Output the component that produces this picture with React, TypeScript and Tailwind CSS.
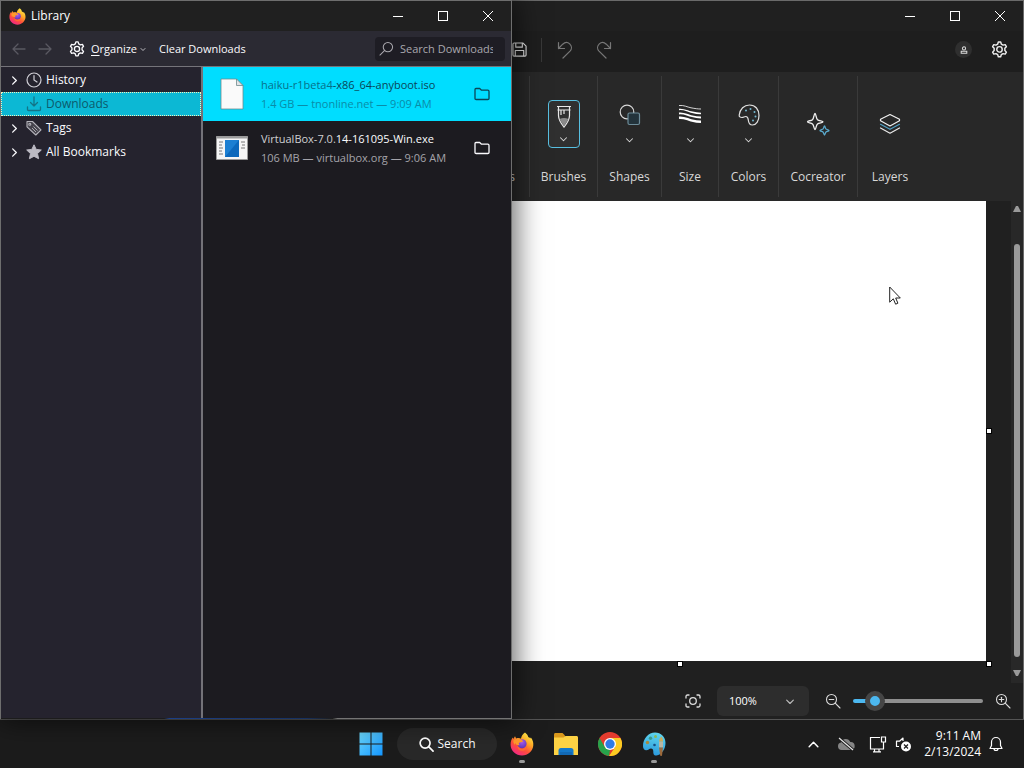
import React from 'react';

type P = { className?: string };

function Firefox({ className, id }: P & { id: string }) {
  return (
    <svg viewBox="0 0 24 24" className={className} aria-hidden="true">
      <defs>
        <linearGradient id={id + 'a'} x1="0.85" y1="0.05" x2="0.25" y2="1">
          <stop offset="0" stopColor="#fff04a" />
          <stop offset="0.35" stopColor="#ffa927" />
          <stop offset="0.65" stopColor="#ff5038" />
          <stop offset="1" stopColor="#f0248c" />
        </linearGradient>
        <radialGradient id={id + 'b'} cx="0.5" cy="0.3" r="0.7">
          <stop offset="0" stopColor="#a75cf0" />
          <stop offset="1" stopColor="#5b34b8" />
        </radialGradient>
      </defs>
      <path
        fill={'url(#' + id + 'a)'}
        d="M15 0.5c2 1.5 3 3 3.3 4.8 1-.2 1.5.6 1.8 1.3l.8-1c1.8 2.3 2.6 4.900 2.400 7.600C23 19 18 23.500 12 23.500S.8 19 .6 13C.5 9.500 1.500 7 2.800 5.500l.5 1.500L5 4.300l1.200 2.200C8 5.900 9.800 6 11 6.800 11.200 4.500 12.800 2 15 .5z"
      />
      <circle cx="12" cy="11.800" r="4.600" fill={'url(#' + id + 'b)'} />
      <path fill="#ff9a2b" d="M3.500 8.500c2-2 5-2.300 7.500-1.200l2.300 1.900c-1 1-3.500.8-4.200 1.600-.5.700-.2 1.600.6 2.200-2 .6-3.800-.4-4.300-2.100-.5.500-.7 1.200-.7 2-1-1.300-1.500-2.900-1.200-4.400z" />
      <path fill="#ff6a33" d="M7.200 13.500c1 2.200 3 3.400 5.200 3.200 2.200-.1 4-1.500 4.600-3.500.6 3-1.500 5.600-5 5.600-2.600 0-4.600-2-4.800-5.300z" />
    </svg>
  );
}

function Gear({ className }: P) {
  return (
    <svg viewBox="0 0 16 16" className={className} fill="none" stroke="currentColor" strokeWidth="1.200" strokeLinejoin="round" aria-hidden="true">
      <path d="M6.500 2.500 7 .8h2l.5 1.700 1.500.9 1.800-.4 1 1.700-1.300 1.400v1.800l1.300 1.400-1 1.700-1.800-.4-1.500.9-.5 1.700H7l-.5-1.700-1.500-.9-1.800.4-1-1.700 1.300-1.400V6.100L2.200 4.700l1-1.700 1.800.4z" transform="translate(0 .9)" />
      <circle cx="8" cy="7.900" r="2.300" />
    </svg>
  );
}

function Chevron({ className, dir = 'down' }: P & { dir?: 'down' | 'right' | 'up' }) {
  const d = { down: 'M2 5l4 4 4-4', right: 'M4 2l4 4-4 4', up: 'M2 8l4-4 4 4' }[dir];
  return (
    <svg viewBox="0 0 12 12" className={className} fill="none" stroke="currentColor" strokeWidth="1.400" strokeLinecap="round" strokeLinejoin="round" aria-hidden="true">
      <path d={d} />
    </svg>
  );
}

function Magnifier({ className, sign = '' }: P & { sign?: '' | '-' | '+' }) {
  return (
    <svg viewBox="0 0 16 16" className={className} fill="none" stroke="currentColor" strokeWidth="1.100" strokeLinecap="round" aria-hidden="true">
      <circle cx="6.500" cy="6.500" r="5" />
      <path d="M10.200 10.200 15 15" />
      {sign !== '' && <path d="M4.200 6.500h4.600" />}
      {sign === '+' && <path d="M6.500 4.200v4.600" />}
    </svg>
  );
}

function Caption() {
  return (
    <div className="flex h-[30px] shrink-0 items-center text-white">
      <button aria-label="Minimize" className="flex h-full w-[46px] items-center justify-center">
        <svg viewBox="0 0 10 10" className="size-[10px]" stroke="currentColor" shapeRendering="crispEdges"><path d="M0 5.500h10" /></svg>
      </button>
      <button aria-label="Maximize" className="flex h-full w-11 items-center justify-center">
        <svg viewBox="0 0 10 10" className="size-[10px]" fill="none" stroke="currentColor" shapeRendering="crispEdges"><path d="M.5.5h9v9h-9z" /></svg>
      </button>
      <button aria-label="Close" className="flex h-full w-[46px] items-center justify-center">
        <svg viewBox="0 0 10 10" className="size-[10px]" fill="none" stroke="currentColor"><path d="M0 0l10 10M10 0 0 10" /></svg>
      </button>
    </div>
  );
}

function Arrow({ flip }: { flip?: boolean }) {
  return (
    <svg viewBox="0 0 14 12" className={'h-3 w-[14px] ' + (flip ? 'rotate-180' : '')} fill="none" stroke="currentColor" strokeWidth="1.300" strokeLinecap="round" strokeLinejoin="round" aria-hidden="true">
      <path d="M13 6H1M6 1 1 6l5 5" />
    </svg>
  );
}

const places = [
  {
    label: 'History',
    icon: (
      <svg viewBox="0 0 16 16" className="size-4" fill="none" stroke="#d0cfd6" strokeWidth="1.200" strokeLinecap="round">
        <circle cx="8" cy="8" r="7" /><path d="M8 3.500V8l3 2" />
      </svg>
    ),
  },
  {
    label: 'Downloads',
    selected: true,
    icon: (
      <svg viewBox="0 0 16 16" className="size-4" fill="none" stroke="#137487" strokeWidth="1.300" strokeLinecap="round" strokeLinejoin="round">
        <path d="M8 1v9M4.500 6.500 8 10l3.500-3.500M1.500 11v2.500c0 .6.4 1 1 1h11c.6 0 1-.4 1-1V11" />
      </svg>
    ),
  },
  {
    label: 'Tags',
    icon: (
      <svg viewBox="0 0 16 16" className="size-4" fill="#45434c" stroke="#b5b4bb" strokeWidth="1.100" strokeLinejoin="round">
        <path d="M1 1.500h5.500l8.500 8.300-5.200 5.200L1 6.800z" /><circle cx="3.800" cy="4.200" r="1" fill="#25232e" /><path d="m7.500 6.500 4 4M6 8l4 4" strokeWidth=".9" />
      </svg>
    ),
  },
  {
    label: 'All Bookmarks',
    icon: (
      <svg viewBox="0 0 16 16" className="size-4" fill="#bcbac3" stroke="#bcbac3" strokeLinejoin="round">
        <path d="M8 .8l2.200 4.600 5.100.6-3.800 3.600 1.100 5.100L8 12.300l-4.600 2.400 1.100-5.100L.7 6l5.100-.6z" />
      </svg>
    ),
  },
];

function FolderButton({ name }: { name: string }) {
  return (
    <button aria-label={'Show ' + name + ' in folder'} className="mr-[21px] shrink-0">
      <svg viewBox="0 0 16 14" className="h-[14px] w-4" fill="none" stroke="currentColor" strokeWidth="1.300" strokeLinejoin="round">
        <path d="M1 11.500v-9c0-.6.4-1 1-1h3.700L7.500 3.200h6.300c.7 0 1.200.5 1.200 1.200v7c0 .7-.5 1.100-1.200 1.100H2.200c-.7 0-1.200-.3-1.200-1z" />
      </svg>
    </button>
  );
}

function Library() {
  return (
    <section aria-label="Library" className="relative z-10 flex w-1/2 shrink-0 flex-col border-x border-t border-[#6e6e6e] bg-[#1c1b20] shadow-[2px_0_26px_2px_rgba(0,0,0,0.6)]">
      <header className="flex h-[30px] shrink-0 items-center bg-[#202020] pl-2">
        <Firefox id="lib" className="size-[17px]" />
        <h1 className="ml-[5px] flex-1 text-white">Library</h1>
        <Caption />
      </header>
      <div className="flex h-[35px] shrink-0 items-center bg-[#2b2a33] text-[11px]">
        <button aria-label="Back" className="ml-[11px] text-[#5a5962]"><Arrow /></button>
        <button aria-label="Forward" className="ml-3 text-[#5a5962]"><Arrow flip /></button>
        <button className="ml-4 flex items-center text-[#fbfbfe]">
          <Gear className="size-[18px]" />
          <span className="ml-[5px]"><span className="underline underline-offset-2">O</span>rganize</span>
          <Chevron className="ml-[3px] size-[6px]" />
        </button>
        <button className="ml-[13px] text-[#fbfbfe]">Clear Downloads</button>
        <label className="mr-[6px] ml-auto flex h-6 w-[130px] items-center rounded bg-[#1e1d24] pl-1 text-[#a9a8ae]">
          <Magnifier className="size-[15px] shrink-0 -scale-x-100" />
          <input type="search" aria-label="Search Downloads" placeholder="Search Downloads" className="ml-[6px] w-full min-w-0 bg-transparent outline-none placeholder:text-[#a9a8ae]" />
        </label>
      </div>
      <div className="flex min-h-0 flex-1 border-t border-[#75747a]">
        <nav className="w-[202px] shrink-0 border-r-2 border-[#737278] bg-[#25232e] pt-px">
          {places.map((p) => (
            <button
              key={p.label}
              className={'flex h-6 w-full items-center pl-2 text-left ' + (p.selected ? 'border border-dotted border-[#f2f3c0] bg-[#0cb8d4] text-[#0d5a6c]' : 'border border-transparent text-[#fbfbfe]')}
            >
              <span className="w-4 shrink-0">{!p.selected && <Chevron dir="right" className="-ml-px size-[11px]" />}</span>
              {p.icon}
              <span className="ml-1">{p.label}</span>
            </button>
          ))}
        </nav>
        <ul className="min-w-0 flex-1">
          <li className="flex h-[54px] items-center bg-[#00ddff] text-[#0a4658]">
            <svg viewBox="0 0 24 32" className="ml-[17px] h-8 w-6 shrink-0" aria-hidden="true">
              <path d="M1 1h15.500L23 7.500V31H1z" fill="#fafafa" stroke="#6e8a8e" strokeWidth=".8" /><path d="M16.500 1v6.500H23z" fill="#e2e4e6" stroke="#6e8a8e" strokeWidth=".8" />
            </svg>
            <div className="ml-[17px] flex-1 text-[11px] leading-[19px]">
              <p><span className="text-[#07718a]">haiku-r1beta4</span>-x86_64-anyboot.iso</p>
              <p className="text-[#0a8ca8]">1.4 GB — tnonline.net — 9:09 AM</p>
            </div>
            <FolderButton name="haiku-r1beta4-x86_64-anyboot.iso" />
          </li>
          <li className="flex h-[54px] items-center text-[#fbfbfe]">
            <svg viewBox="0 0 32 24" className="ml-[13px] h-6 w-8 shrink-0" aria-hidden="true">
              <path d="M.5.5h31v23H.5z" fill="#f5f5f5" stroke="#9a9a9a" /><path d="M.5.5h31v2H.5z" fill="#9b9b9b" />
              <path d="M9 4h14v17H9z" fill="#1c7fd2" /><path d="M9 21 23 4v17z" fill="#0c68bc" />
              <path d="M3 6h4M3 9h3M3 12h4M3 15h3M3 18h4M25 6h4M26 9h3M25 12h4" stroke="#777" />
            </svg>
            <div className="ml-[13px] flex-1 text-[11px] leading-[19px]">
              <p><span className="text-[#d0d0d3]">VirtualBox-7.0.</span>14-161095-Win.exe</p>
              <p className="text-[#a5a4aa]">106 MB — virtualbox.org — 9:06 AM</p>
            </div>
            <FolderButton name="VirtualBox-7.0.14-161095-Win.exe" />
          </li>
        </ul>
      </div>
      <div className="h-px shrink-0 bg-[linear-gradient(to_right,#1c1c1c_32%,#1c3f86_33%,#16305f_60%,#1c1c1c_65%,#747474_66%)]" />
    </section>
  );
}

const brush = (
  <svg viewBox="0 0 16 24" className="h-6 w-4" fill="none" stroke="#e8e8e8" strokeWidth="1.200" aria-hidden="true">
    <path d="M1 1.500h14M1.500 5h13" /><path d="M2.500 1.500v9c0 4 3 8.500 5.500 11.500 2.500-3 5.500-7.500 5.500-11.500v-9" />
    <path d="M5 5v5M8 5v4" /><path d="M3.500 14c3-1.500 6-1.500 9 0L8 21.500z" fill="#8a8a8a" stroke="none" />
  </svg>
);
const shapes = (
  <svg viewBox="0 0 22 22" className="size-[22px]" fill="none" strokeWidth="1.200" aria-hidden="true">
    <circle cx="8" cy="8" r="6.800" stroke="#d8d8d8" /><rect x="9" y="9" width="11.500" height="11.500" rx="1.500" fill="#23333b" stroke="#6d8c99" />
  </svg>
);
const sizes = (
  <svg viewBox="0 0 24 20" className="h-5 w-6" fill="none" stroke="#fff" aria-hidden="true">
    <path d="M1 1.500c5-.5 8 1.500 12 2.300S20 5 23 5" strokeWidth=".8" /><path d="M1 5.500c5-.5 8 1.500 12 2.500s7 1.500 10 1.500" strokeWidth="1.300" />
    <path d="M1 9.500c5-.5 8 1.500 12 2.500s7 1.500 10 1.500" strokeWidth="1.800" /><path d="M1 13.800c5-.5 8 1.500 12 2.500s7 1.500 10 1.500" strokeWidth="2.400" />
  </svg>
);
const palette = (
  <svg viewBox="0 0 22 22" className="size-[22px]" fill="none" stroke="#e0e0e0" strokeWidth="1.200" aria-hidden="true">
    <path d="M1.200 11C2 5 6 1 11.500 1 17.500 1 21 5.500 21 11.500c0 5-2.500 9.500-6.500 9.500-3.500 0-4-2.500-4.200-5-.2-2-.8-3.500-2.500-3.500-1.500 0-2.300 1-3.800 1-1.800 0-3-.8-2.800-2.500z" />
    <g fill="#75b8d0" stroke="none"><circle cx="8" cy="6.500" r="1" /><circle cx="12.500" cy="5" r="1" /><circle cx="16.500" cy="8" r="1" /><circle cx="17.500" cy="12.500" r="1" /><circle cx="15" cy="16.500" r="1" /></g>
  </svg>
);
const cocreator = (
  <svg viewBox="0 0 24 24" className="size-6" fill="none" strokeWidth="1.300" strokeLinejoin="round" aria-hidden="true">
    <path d="M9 1.500c1 0 1 5 2.500 6.200C13 9 17 8.700 17 9.800s-4 .9-5.500 2.200S10 17.500 9 17.500s-1-4.200-2.500-5.500S1.500 11 1.500 9.800s3.500-.8 5-2.100S8 1.500 9 1.500z" stroke="#f0f0f0" />
    <path d="M18.500 14c.7 0 .7 2.500 1.500 3.100s3 .5 3 1.400-2.200.8-3 1.500-.8 3-1.500 3-.7-2.300-1.500-3-3-.6-3-1.500 2.200-.8 3-1.400.8-3.100 1.500-3.100z" stroke="#5aa9cc" />
  </svg>
);
const layers = (
  <svg viewBox="0 0 24 24" className="size-6" fill="none" strokeWidth="1.200" strokeLinejoin="round" strokeLinecap="round" aria-hidden="true">
    <path d="m12 2.500 9.500 4.800v1.500L12 14 2.500 8.800V7.300z" stroke="#f0f0f0" />
    <path d="m2.500 12.300 9.500 5 9.500-5" stroke="#4f9fc4" /><path d="m2.500 16 9.500 5.200L21.500 16" stroke="#e8e8e8" />
  </svg>
);

function Tool({ label, icon, width, menu, active, last }: { label: string; icon: React.ReactNode; width: string; menu?: boolean; active?: boolean; last?: boolean }) {
  return (
    <div className={'flex shrink-0 flex-col items-center ' + width + (last ? '' : ' border-r border-[#3a3a3a]')}>
      <button
        aria-label={label + ' tool'}
        className={'mt-6 flex h-12 w-8 flex-col items-center rounded text-[#d6d6d6] ' + (menu ? 'justify-between pt-1 pb-1' : 'justify-center') + (active ? ' border border-[#58bfe0] bg-[#303030]' : '')}
      >
        {icon}
        {menu && <Chevron className="size-[9px]" />}
      </button>
      <span className="mt-[21px] text-[#d8d8d8]">{label}</span>
    </div>
  );
}

function Paint() {
  return (
    <section aria-label="Paint" className="flex min-w-0 flex-1 flex-col border-t border-r border-[#6a6a6a] bg-[#202020]">
      <header className="flex h-[30px] shrink-0 justify-end"><Caption /></header>
      <div className="flex h-[41px] shrink-0 items-center bg-[#1e1e1e] pb-1">
        <button aria-label="Save" className="text-[#e6e6e6]">
          <svg viewBox="0 0 16 16" className="size-[15px]" fill="none" stroke="currentColor" strokeWidth="1.200" strokeLinejoin="round">
            <path d="M1 2.200C1 1.500 1.500 1 2.200 1h9.300L15 4.500v9.300c0 .7-.5 1.200-1.200 1.200H2.200C1.500 15 1 14.500 1 13.800z" /><path d="M4 1v4.500h7V1M3.500 15V9h9v6" />
          </svg>
        </button>
        <span className="ml-[14px] h-6 w-px bg-[#383838]" />
        <button aria-label="Undo" className="ml-[15px] text-[#777]">
          <svg viewBox="0 0 16 18" className="h-[18px] w-4" fill="none" stroke="currentColor" strokeWidth="1.200" strokeLinecap="round" strokeLinejoin="round"><path d="M1.500 1.500v6h6M1.500 7.500l4.200-4.300c2.200-2 5-2.100 7-.3 2.300 2.200 2.200 5.200.3 7.200L6 17" /></svg>
        </button>
        <button aria-label="Redo" className="ml-[23px] text-[#777]">
          <svg viewBox="0 0 16 18" className="h-[18px] w-4 -scale-x-100" fill="none" stroke="currentColor" strokeWidth="1.200" strokeLinecap="round" strokeLinejoin="round"><path d="M1.500 1.500v6h6M1.500 7.500l4.200-4.300c2.200-2 5-2.100 7-.3 2.300 2.200 2.200 5.200.3 7.200L6 17" /></svg>
        </button>
        <button aria-label="Account" className="ml-auto flex size-[17px] items-center justify-center rounded-full bg-[#2f2f2f]">
          <svg viewBox="0 0 10 10" className="size-2" fill="none" stroke="#ddd" strokeWidth="1.300"><circle cx="5" cy="3" r="2" /><path d="M1.500 6.500h7V9h-7z" /></svg>
        </button>
        <button aria-label="Settings" className="mr-[14px] ml-[18px] text-[#eee]"><Gear className="size-[19px]" /></button>
      </div>
      <div className="flex h-[129px] shrink-0 bg-[#282828] py-1">
        <div className="flex w-[18px] shrink-0 flex-col items-end justify-end overflow-hidden border-r border-[#3a3a3a] pr-[14px] pb-3 text-[#d8d8d8]">Tools</div>
        <Tool label="Brushes" icon={brush} width="w-[68px]" menu active />
        <Tool label="Shapes" icon={shapes} width="w-16" menu />
        <Tool label="Size" icon={sizes} width="w-[57px]" menu />
        <Tool label="Colors" icon={palette} width="w-[60px]" menu />
        <Tool label="Cocreator" icon={cocreator} width="w-[79px]" />
        <Tool label="Layers" icon={layers} width="w-16" last />
      </div>
      <div className="flex min-h-0 flex-1">
        <div className="min-w-0 flex-1 pr-[25px] pb-[22px]">
          <div className="relative h-full bg-white">
            <i className="absolute top-1/2 -right-[6px] -mt-[3px] size-[6px] border border-black bg-white" />
            <i className="absolute -right-[6px] -bottom-[6px] size-[6px] border border-black bg-white" />
            <i className="absolute -bottom-[6px] left-[35%] -ml-px size-[6px] border border-black bg-white" />
          </div>
        </div>
        <div className="flex w-3 shrink-0 flex-col items-center bg-[#282828] pt-1 pb-[6px]">
          <svg viewBox="0 0 8 8" className="size-2" fill="#9a9a9a"><path d="M3 1h2l3 6H0z" /></svg>
          <span className="mt-[31px] mb-3 w-[6px] flex-1 rounded-full bg-[#9a9a9a]" />
          <svg viewBox="0 0 8 8" className="size-2" fill="#9a9a9a"><path d="M3 7h2l3-6H0z" /></svg>
        </div>
      </div>
      <footer className="flex h-9 shrink-0 items-center justify-end pr-3 text-[#dcdcdc]">
        <button aria-label="Fit to window">
          <svg viewBox="0 0 16 16" className="size-4" fill="none" stroke="currentColor" strokeWidth="1.300" strokeLinecap="round"><circle cx="8" cy="8" r="3.300" /><path d="M1 5V3.500C1 2.500 1.500 2 2.500 2H4M12 2h1.500c1 0 1.500.5 1.500 1.500V5M15 11v1.500c0 1-.5 1.500-1.500 1.500H12M4 14H2.500C1.500 14 1 13.500 1 12.500V11" /></svg>
        </button>
        <label className="relative ml-4 flex items-center">
          <select aria-label="Zoom level" defaultValue="100%" className="h-[30px] w-[92px] appearance-none rounded-md bg-[#2d2d2d] pl-3 text-[11px] text-white"><option>100%</option></select>
          <Chevron className="pointer-events-none absolute right-[14px] size-[10px] text-[#bbb]" />
        </label>
        <button aria-label="Zoom out" className="ml-4"><Magnifier sign="-" className="size-4" /></button>
        <input
          type="range"
          aria-label="Zoom"
          min="0"
          max="100"
          defaultValue="11"
          className="ml-3 h-5 w-[130px] appearance-none bg-transparent [&::-webkit-slider-runnable-track]:h-1 [&::-webkit-slider-runnable-track]:rounded-full [&::-webkit-slider-runnable-track]:bg-[linear-gradient(to_right,#4cb8f0_17%,#8f8f8f_17%)] [&::-webkit-slider-thumb]:-mt-2 [&::-webkit-slider-thumb]:size-5 [&::-webkit-slider-thumb]:appearance-none [&::-webkit-slider-thumb]:rounded-full [&::-webkit-slider-thumb]:border-[5px] [&::-webkit-slider-thumb]:border-[#454545] [&::-webkit-slider-thumb]:bg-[#4cb8f0]"
        />
        <button aria-label="Zoom in" className="ml-3"><Magnifier sign="+" className="size-4" /></button>
      </footer>
    </section>
  );
}

function TaskIcon({ label, running, children }: { label: string; running?: boolean; children: React.ReactNode }) {
  return (
    <button aria-label={label} className="flex h-12 w-11 flex-col items-center pt-3">
      {children}
      {running && <span className="mt-1 h-[3px] w-[6px] shrink-0 rounded-full bg-[#9a9a9a]" />}
    </button>
  );
}

function Taskbar() {
  return (
    <footer className="grid h-12 shrink-0 grid-cols-[1fr_auto_1fr] items-center bg-[#1c1c1c]">
      <span />
      <div className="flex items-center pl-[10px]">
        <button aria-label="Start" className="mr-[14px]">
          <svg viewBox="0 0 24 24" className="size-6">
            <defs><linearGradient id="win" x1="0" y1="0" x2="24" y2="24" gradientUnits="userSpaceOnUse"><stop stopColor="#6fdcff" /><stop offset="1" stopColor="#1294ff" /></linearGradient></defs>
            <path fill="url(#win)" d="M.5.5h11v11H.5zM12.500.5h11v11h-11zM.5 12.500h11v11H.5zM12.500 12.500h11v11h-11z" />
          </svg>
        </button>
        <button className="mr-[3px] flex h-8 w-[100px] items-center rounded-full bg-[#292929] pl-[22px] text-white">
          <svg viewBox="0 0 16 16" className="size-[15px]" fill="none" stroke="currentColor" strokeWidth="1.800" strokeLinecap="round"><circle cx="6.500" cy="6.500" r="5.300" /><path d="m10.500 10.500 4.500 4.500" /></svg>
          <span className="ml-1">Search</span>
        </button>
        <TaskIcon label="Firefox" running><Firefox id="task" className="size-6 shrink-0" /></TaskIcon>
        <TaskIcon label="File Explorer">
          <svg viewBox="0 0 26 24" className="h-6 w-[26px]">
            <path d="M1 2.500C1 1.700 1.500 1 2.500 1h7L12 3.500V9H1z" fill="#d9981c" /><path d="M1 5.500h9.500L12.500 4h11c.9 0 1.500.6 1.500 1.500V23H1z" fill="#fdd244" />
            <path d="M5.500 23v-4.500c0-1.400.9-2.500 2.500-2.500h10c1.500 0 2.500 1 2.500 2.500V23z" fill="#1478ca" /><path d="M7 20h12v3H7z" fill="#1269b5" />
          </svg>
        </TaskIcon>
        <TaskIcon label="Chrome">
          <svg viewBox="0 0 24 24" className="size-6">
            <circle cx="12" cy="12" r="12" fill="#e33b2e" />
            <path d="M1.600 6 6.800 15 12 18l-1 6A12 12 0 0 1 1.600 6z" fill="#27a24b" />
            <path d="M12 6h10.400A12 12 0 0 1 11 24l6.200-9z" fill="#fccb22" />
            <circle cx="12" cy="12" r="6" fill="#fff" /><circle cx="12" cy="12" r="4.700" fill="#2f7be6" />
          </svg>
        </TaskIcon>
        <TaskIcon label="Paint" running>
          <svg viewBox="0 0 24 24" className="size-6 shrink-0">
            <defs><linearGradient id="pal" x1=".6" y1="0" x2=".4" y2="1"><stop stopColor="#5fd6ee" /><stop offset="1" stopColor="#2a98dc" /></linearGradient></defs>
            <path d="M1 14C1 6.500 6.500.5 13 .5c6 0 10.500 4.500 10.500 10.500 0 6-4 12-9 12.500-3 .2-3.200-2-3.200-4 0-2-.8-3-2.300-3-2 0-2.500 1.800-4.800 1.800-2 0-3.200-1.800-3.200-4.300z" fill="url(#pal)" />
            <circle cx="5.500" cy="10.500" r="1.700" fill="#a98a3c" /><circle cx="8.500" cy="6.200" r="1.700" fill="#3a9a8a" /><circle cx="13.500" cy="4.500" r="1.500" fill="#8ab85a" /><circle cx="12.500" cy="13" r="1.300" fill="#174d82" />
            <path d="M17 9.500h4v6h-4z" fill="#b9b6a4" /><path d="M17 15.500h4l-1 8c-.3.700-1.500.700-1.800 0z" fill="#9c6a3c" /><path d="M17 9.500c0-2 1-3.500 2.500-5 1 1.500 1.500 3 1.500 5z" fill="#c9ab5c" />
          </svg>
        </TaskIcon>
      </div>
      <div className="flex items-center justify-end pr-[21px] text-white">
        <button aria-label="Show hidden icons"><Chevron dir="up" className="size-[13px]" /></button>
        <svg viewBox="0 0 18 14" className="ml-[17px] h-[14px] w-[18px]" aria-label="OneDrive offline">
          <path d="M4.500 13A3.800 3.800 0 0 1 4 5.500 5 5 0 0 1 13.300 5a4 4 0 0 1 .7 8z" fill="#858585" /><path d="m2 1 14 12" stroke="#1c1c1c" strokeWidth="3" /><path d="m2 1 14 12" stroke="#e8e8e8" strokeWidth="1.200" />
        </svg>
        <svg viewBox="0 0 18 17" className="ml-[14px] h-[17px] w-[18px]" fill="none" stroke="#fff" strokeWidth="1.200" aria-label="Network">
          <path d="M11 1.500H1.500v11.500h13V9M5.500 13v2.500M10 13v2.500M4 15.900h8M12.500 1h4v5h-4zM14.500 6v3" />
        </svg>
        <svg viewBox="0 0 17 17" className="ml-2 size-[17px]" fill="none" stroke="#fff" strokeWidth="1.200" strokeLinejoin="round" aria-label="Volume muted">
          <path d="M8 5V2L4.500 5.200H1.500v5.300H4" /><circle cx="11" cy="10.500" r="5" fill="#fff" stroke="none" /><path d="m9 8.500 4 4m0-4-4 4" stroke="#1c1c1c" />
        </svg>
        <time className="ml-3 text-right leading-4">9:11 AM<br />2/13/2024</time>
        <button aria-label="Notifications" className="ml-2">
          <svg viewBox="0 0 14 16" className="h-4 w-[14px]" fill="none" stroke="currentColor" strokeWidth="1.200" strokeLinejoin="round"><path d="M2.500 9.500V6a4.500 4.500 0 0 1 9 0v3.500L13 12.500H1zM5 12.500a2 2 0 0 0 4 0" /></svg>
        </button>
      </div>
    </footer>
  );
}

export default function App() {
  return (
    <main className="relative flex h-screen flex-col overflow-hidden bg-[#111] font-['Open_Sans','Noto_Sans',sans-serif] text-[12px] leading-4">
      <div className="flex min-h-0 flex-1 border-b border-[#555]">
        <Library />
        <Paint />
      </div>
      <Taskbar />
      <svg viewBox="0 0 12 19" className="absolute top-[286px] left-[889px] z-20 h-[19px] w-3" aria-hidden="true">
        <path d="M.7 1v15.200l3.600-3.400 2.300 5.400 2.300-1L6.700 12h4.600z" fill="#fff" stroke="#222" strokeWidth="1" />
      </svg>
    </main>
  );
}
